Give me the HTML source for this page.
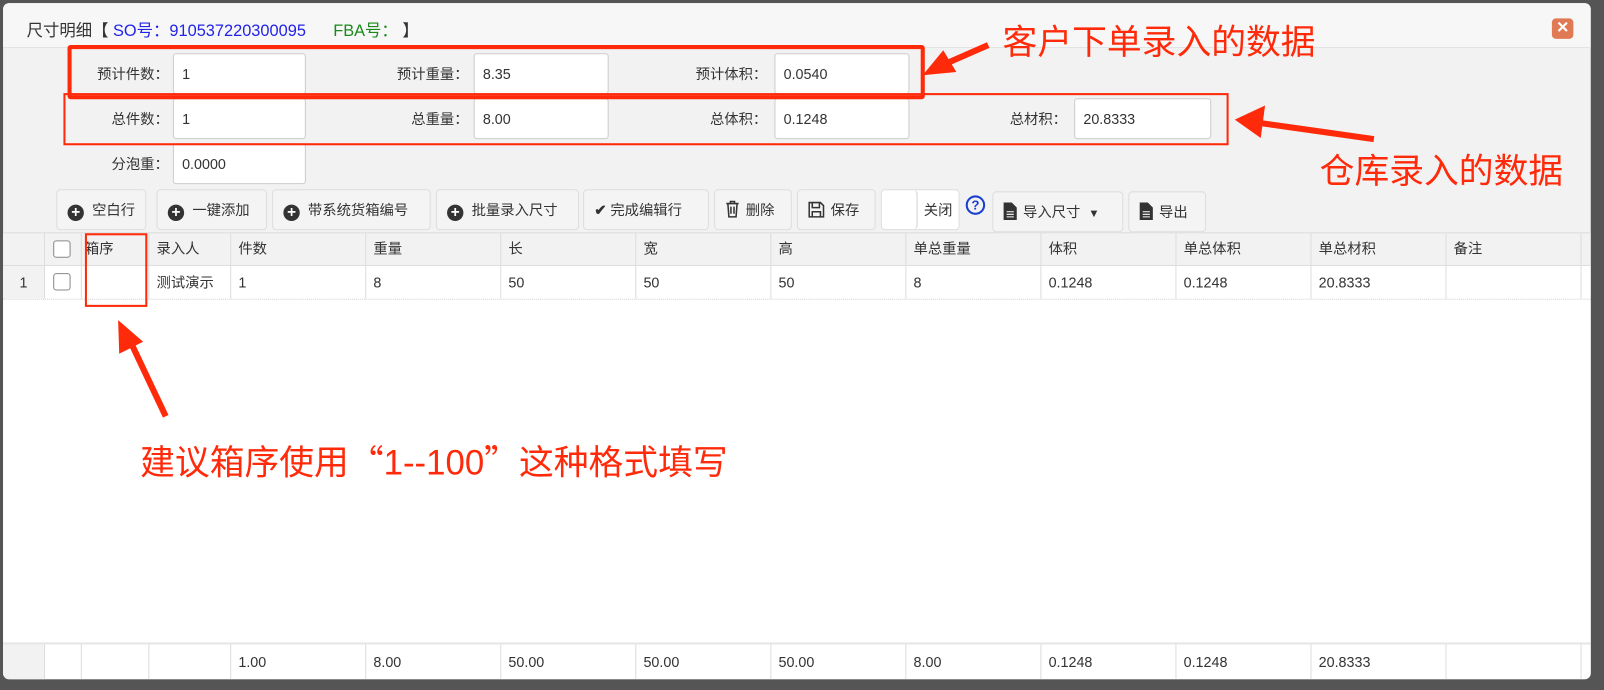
<!DOCTYPE html><html><head><meta charset="utf-8"><style>
*{margin:0;padding:0;box-sizing:border-box}
body{width:1604px;height:689px;background:#555;position:relative;overflow:hidden;font-family:"Liberation Sans","Noto Sans CJK SC",sans-serif;font-size:14px;color:#333}
#w{position:absolute;left:0;top:0;width:1568px;height:674px;transform:scale(1.023);transform-origin:0 0}
.a{position:absolute}
.dlg{left:3px;top:3px;width:1552px;height:661px;background:#f2f2f2;border-radius:6px;overflow:hidden}
.lbl{text-align:right;width:120px;font-size:14px;color:#333}
.in{background:#fff;border:1px solid #ccc;border-radius:3px;height:40px;padding:0 8px;line-height:38px;font-size:14px}
.btn{background:#f4f4f4;border:1px solid #ddd;border-radius:4px;height:40px;line-height:38px;padding:0 0 0 10px;font-size:14px;color:#333;white-space:nowrap}
.pl{display:inline-block;width:16px;height:16px;border-radius:50%;background:#333;color:#fff;text-align:center;line-height:16px;font-size:15px;font-weight:bold;vertical-align:-2px;margin-right:8px}
.cell{position:absolute;border-right:1px solid #ddd;padding-left:7px;font-size:14px;height:100%}
.row{position:absolute;left:0;width:1552px}
.cb{position:absolute;width:17px;height:17px;border:1px solid #888;border-radius:3px;background:#fff}
.red{color:#ff2a0a;font-size:34px;font-family:"Liberation Sans","Noto Sans CJK SC",sans-serif;white-space:nowrap}
.q{font-family:"Noto Sans CJK SC",sans-serif}
svg.i{vertical-align:-3px;margin-right:6px}
</style></head><body><div id="w">
<div class="a dlg">
 <div class="a" style="left:0;top:0;width:1552px;height:44px;background:#f7f7f7;border-bottom:1px solid #e2e2e2"></div>
 <div class="a" style="left:23px;top:13px;font-size:16px;color:#333">尺寸明细【 <span style="color:#2323e8">SO号：910537220300095</span>&nbsp;&nbsp;&nbsp;&nbsp;&nbsp;&nbsp;<span style="color:#1a8a1a">FBA号：</span> 】</div>
 <div class="a" style="left:1514px;top:15px;width:21px;height:20px;background:#e07a55;border-radius:4px;color:#fff;text-align:center;line-height:20px;font-weight:bold;font-size:15px">✕</div>

 <div class="a lbl" style="left:42px;top:59px">预计件数：</div><div class="a in" style="left:166px;top:49px;width:130px">1</div>
 <div class="a lbl" style="left:335px;top:59px">预计重量：</div><div class="a in" style="left:460px;top:49px;width:132px">8.35</div>
 <div class="a lbl" style="left:627px;top:59px">预计体积：</div><div class="a in" style="left:754px;top:49px;width:132px">0.0540</div>
 <div class="a lbl" style="left:42px;top:103px">总件数：</div><div class="a in" style="left:166px;top:93px;width:130px">1</div>
 <div class="a lbl" style="left:335px;top:103px">总重量：</div><div class="a in" style="left:460px;top:93px;width:132px">8.00</div>
 <div class="a lbl" style="left:627px;top:103px">总体积：</div><div class="a in" style="left:754px;top:93px;width:132px">0.1248</div>
 <div class="a lbl" style="left:920px;top:103px">总材积：</div><div class="a in" style="left:1047px;top:93px;width:134px">20.8333</div>
 <div class="a lbl" style="left:42px;top:147px">分泡重：</div><div class="a in" style="left:166px;top:137px;width:130px">0.0000</div>

 <div class="a btn" style="left:52px;top:182px;width:88px"><span class="pl">+</span>空白行</div>
 <div class="a btn" style="left:150px;top:182px;width:108px"><span class="pl">+</span>一键添加</div>
 <div class="a btn" style="left:263px;top:182px;width:155px"><span class="pl">+</span>带系统货箱编号</div>
 <div class="a btn" style="left:423px;top:182px;width:140px"><span class="pl">+</span>批量录入尺寸</div>
 <div class="a btn" style="left:567px;top:182px;width:123px"><b>✔</b> 完成编辑行</div>
 <div class="a btn" style="left:695px;top:182px;width:76px"><svg class="i" width="14" height="17" viewBox="0 0 14 17"><path d="M1 3h12M5 3V1h4v2M2.5 3l1 13h7l1-13M5.5 6v7M8.5 6v7" stroke="#333" stroke-width="1.5" fill="none"/></svg>删除</div>
 <div class="a btn" style="left:776px;top:182px;width:77px"><svg class="i" width="16" height="16" viewBox="0 0 16 16"><path d="M1 1h11l3 3v11H1z M4 1v5h7V1 M4 15v-5h8v5" stroke="#333" stroke-width="1.5" fill="none"/></svg>保存</div>
 <div class="a btn" style="left:858px;top:182px;width:77px;background:#fff;padding-left:41px"><div class="a" style="left:0;top:0;width:35px;height:38px;border-right:1px solid #ccc;border-radius:4px"></div>关闭</div>
 <div class="a" style="left:941px;top:188px;width:19px;height:19px;border:2px solid #1a3fd0;border-radius:50%;color:#1a3fd0;font-weight:bold;font-size:13px;text-align:center;line-height:15px">?</div>
 <div class="a btn" style="left:967px;top:184px;width:128px"><svg class="i" width="13" height="17" viewBox="0 0 13 17"><path d="M0 0h8l5 5v12H0z" fill="#333"/><path d="M3 9h7M3 11.5h7M3 14h7" stroke="#fff"/></svg>导入尺寸 <span style="font-size:11px;margin-left:4px">▼</span></div>
 <div class="a btn" style="left:1100px;top:184px;width:76px"><svg class="i" width="13" height="17" viewBox="0 0 13 17"><path d="M0 0h8l5 5v12H0z" fill="#333"/><path d="M3 9h7M3 11.5h7M3 14h7" stroke="#fff"/></svg>导出</div>

 <div class="row" style="top:224px;height:33px;background:#f2f2f2;border-top:1px solid #ddd;border-bottom:1px solid #ddd">
  <div class="cell" style="left:0;width:41px"></div><div class="cell" style="left:41px;width:36px"><div class="cb" style="left:8px;top:7px"></div></div>
  <div class="cell" style="left:77px;width:66px;line-height:31px;padding-left:3px">箱序</div><div class="cell" style="left:143px;width:80px;line-height:31px">录入人</div>
  <div class="cell" style="left:223px;width:132px;line-height:31px">件数</div><div class="cell" style="left:355px;width:132px;line-height:31px">重量</div>
  <div class="cell" style="left:487px;width:132px;line-height:31px">长</div><div class="cell" style="left:619px;width:132px;line-height:31px">宽</div>
  <div class="cell" style="left:751px;width:132px;line-height:31px">高</div><div class="cell" style="left:883px;width:132px;line-height:31px">单总重量</div>
  <div class="cell" style="left:1015px;width:132px;line-height:31px">体积</div><div class="cell" style="left:1147px;width:132px;line-height:31px">单总体积</div>
  <div class="cell" style="left:1279px;width:132px;line-height:31px">单总材积</div><div class="cell" style="left:1411px;width:132px;line-height:31px">备注</div>
 </div>
 <div class="row" style="top:257px;height:33px;background:#fff;border-bottom:1px dotted #ccc">
  <div class="cell" style="left:0;width:41px;background:#f2f2f2;text-align:center;padding:0;line-height:32px">1</div><div class="cell" style="left:41px;width:36px"><div class="cb" style="left:8px;top:7px"></div></div>
  <div class="cell" style="left:77px;width:66px"></div><div class="cell" style="left:143px;width:80px;line-height:32px">测试演示</div>
  <div class="cell" style="left:223px;width:132px;line-height:32px">1</div><div class="cell" style="left:355px;width:132px;line-height:32px">8</div>
  <div class="cell" style="left:487px;width:132px;line-height:32px">50</div><div class="cell" style="left:619px;width:132px;line-height:32px">50</div>
  <div class="cell" style="left:751px;width:132px;line-height:32px">50</div><div class="cell" style="left:883px;width:132px;line-height:32px">8</div>
  <div class="cell" style="left:1015px;width:132px;line-height:32px">0.1248</div><div class="cell" style="left:1147px;width:132px;line-height:32px">0.1248</div>
  <div class="cell" style="left:1279px;width:132px;line-height:32px">20.8333</div><div class="cell" style="left:1411px;width:132px"></div>
 </div>
 <div class="row" style="top:290px;height:335px;background:#fff"></div>
 <div class="row" style="top:625px;height:36px;background:#fff;border-top:2px solid #e6e6e6">
  <div class="cell" style="left:0;width:41px;background:#f2f2f2"></div><div class="cell" style="left:41px;width:36px"></div>
  <div class="cell" style="left:77px;width:66px"></div><div class="cell" style="left:143px;width:80px"></div>
  <div class="cell" style="left:223px;width:132px;line-height:34px">1.00</div><div class="cell" style="left:355px;width:132px;line-height:34px">8.00</div>
  <div class="cell" style="left:487px;width:132px;line-height:34px">50.00</div><div class="cell" style="left:619px;width:132px;line-height:34px">50.00</div>
  <div class="cell" style="left:751px;width:132px;line-height:34px">50.00</div><div class="cell" style="left:883px;width:132px;line-height:34px">8.00</div>
  <div class="cell" style="left:1015px;width:132px;line-height:34px">0.1248</div><div class="cell" style="left:1147px;width:132px;line-height:34px">0.1248</div>
  <div class="cell" style="left:1279px;width:132px;line-height:34px">20.8333</div><div class="cell" style="left:1411px;width:132px"></div>
 </div>
</div>

<div class="a" style="left:66px;top:44px;width:838px;height:53px;border:4px solid #ff2a0a;border-radius:3px"></div>
<div class="a" style="left:62px;top:91px;width:1139px;height:51px;border:2px solid #ff2a0a"></div>
<div class="a" style="left:83px;top:228px;width:61px;height:72px;border:2px solid #ff2a0a"></div>
<div class="a red" style="left:980px;top:14px">客户下单录入的数据</div>
<div class="a red" style="left:1290px;top:140px">仓库录入的数据</div>
<div class="a red" style="left:137px;top:425px">建议箱序使用<span class="q">“</span>1--100<span class="q">”</span>这种格式填写</div>
<svg class="a" style="left:0;top:0" width="1568" height="674">
 <g fill="#ff2a0a" stroke="#ff2a0a">
  <line x1="966" y1="44" x2="925" y2="62" stroke-width="6"/><polygon points="903,73 922,50 934,70"/>
  <line x1="1343" y1="136" x2="1230" y2="120" stroke-width="6"/><polygon points="1208,117 1236,104 1232,134"/>
  <line x1="162" y1="407" x2="128" y2="335" stroke-width="6"/><polygon points="116,314 139,334 117,345"/>
 </g>
</svg>
</div></body></html>
